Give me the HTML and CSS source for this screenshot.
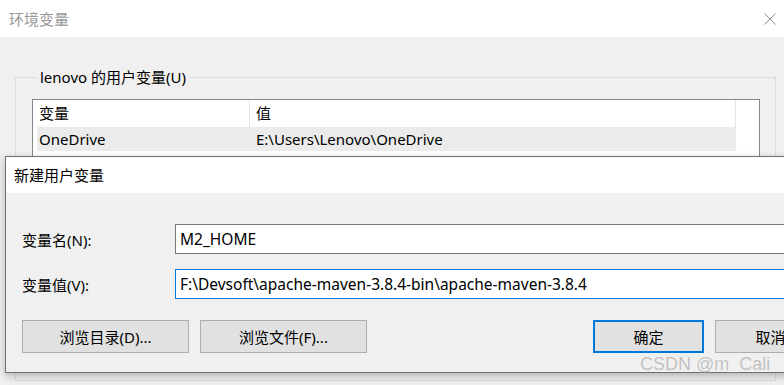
FILE: index.html
```html
<!DOCTYPE html>
<html lang="zh-CN">
<head>
    <meta charset="UTF-8">
    <meta name="viewport" content="width=device-width, initial-scale=1.0">
    <title>环境变量</title>
    <link rel="stylesheet" href="styles.css">
</head>
<body>

    <!-- Hlavní okno: 环境变量 -->
    <div class="window">
        <div class="titlebar">
            <span class="title">环境变量</span>
            <svg class="close-icon" width="12" height="12" viewBox="0 0 12 12">
                <path d="M0.5 0.5 L11.5 11.5 M11.5 0.5 L0.5 11.5" stroke="#8a8a8a" stroke-width="1" fill="none"/>
            </svg>
        </div>
        <div class="window-body">
            <fieldset class="group">
                <legend>lenovo 的用户变量(U)</legend>
                <div class="listbox">
                    <div class="list-head">
                        <div class="col col-name">变量</div>
                        <div class="col col-value">值</div>
                    </div>
                    <div class="list-row">
                        <div class="col col-name">OneDrive</div>
                        <div class="col col-value">E:\Users\Lenovo\OneDrive</div>
                    </div>
                </div>
            </fieldset>
        </div>
    </div>

    <!-- Dialog: 新建用户变量 -->
    <div class="dialog">
        <div class="dialog-title">新建用户变量</div>
        <div class="dialog-body">
            <div class="field">
                <label for="var_name">变量名(N):</label>
                <input type="text" id="var_name" value="M2_HOME">
            </div>
            <div class="field">
                <label for="var_value">变量值(V):</label>
                <input type="text" id="var_value" class="focused" value="F:\Devsoft\apache-maven-3.8.4-bin\apache-maven-3.8.4">
            </div>
            <div class="buttons">
                <button>浏览目录(D)...</button>
                <button>浏览文件(F)...</button>
                <div class="buttons-right">
                    <button class="default">确定</button>
                    <button>取消</button>
                </div>
            </div>
        </div>
    </div>

    <div class="watermark">CSDN @m_Cali</div>

</body>
</html>
```

FILE: styles.css
```css
/* Základ */
body {
    margin: 0;
    width: 784px;
    height: 385px;
    overflow: hidden;
    position: relative;
    background-color: #f0f0f0;
    font-family: "Noto Sans", "Noto Sans CJK SC", sans-serif;
    font-size: 15px;
    color: #000;
}

/* Hlavní okno */
.titlebar {
    height: 37px;
    background-color: #fff;
    display: flex;
    align-items: center;
    justify-content: space-between;
    padding: 0 8px 0 9px;
}

.title {
    color: #999;
}

.window-body {
    padding-top: 30px;
}

.group {
    margin: 0 8px 0 15px;
    padding: 12px 15px 0 16px;
    border: 1px solid #dcdcdc;
    height: 300px;
}

.group legend {
    padding: 0 3px;
    margin-left: 5px;
    line-height: 20px;
}

.listbox {
    border: 1px solid #828790;
    background-color: #fff;
    height: 240px;
}

.list-head,
.list-row {
    display: flex;
    width: 703px;
}

.list-head {
    height: 27px;
    align-items: center;
}

.list-head .col-name {
    border-right: 1px solid #e5e5e5;
}

.list-head .col-value {
    border-right: 1px solid #e5e5e5;
}

.list-head .col {
    height: 27px;
    line-height: 27px;
}

.col-name {
    width: 210px;
    padding-left: 6px;
}

.col-value {
    flex: 1;
    padding-left: 6px;
}

.list-row {
    height: 24px;
    line-height: 24px;
    margin-left: 4px;
    width: 699px;
    background-color: #ebebeb;
}

.list-row .col-name {
    width: 211px;
    padding-left: 2px;
}

/* Dialog přes okno */
.dialog {
    position: absolute;
    left: 5px;
    top: 156px;
    width: 860px;
    border: 1px solid #6f6f6f;
    box-shadow: 0 3px 8px rgba(0, 0, 0, 0.25);
    background-color: #f0f0f0;
}

.dialog-title {
    height: 36px;
    line-height: 36px;
    background-color: #fff;
    padding-left: 8px;
}

.dialog-body {
    padding: 31px 16px 19px 16px;
}

.field {
    display: flex;
    align-items: center;
    margin-bottom: 15px;
}

.field label {
    width: 153px;
}

.field input {
    flex: 1;
    height: 28px;
    border: 1px solid #7a7a7a;
    padding: 0 4px;
    margin: 0;
    font: inherit;
    font-size: 15.5px;
    outline: none;
}

.field input.focused {
    border-color: #0078d7;
}

.buttons {
    display: flex;
    gap: 11px;
    margin-top: 21px;
}

.buttons button {
    width: 167px;
    height: 33px;
    border: 1px solid #adadad;
    background-color: #e1e1e1;
    font: inherit;
    padding: 0;
}

.buttons-right {
    display: flex;
    gap: 11px;
    margin-left: 215px;
}

.buttons-right button {
    width: 111px;
}

.buttons button.default {
    border: 2px solid #0078d7;
}

/* Vodoznak */
.watermark {
    position: absolute;
    left: 640px;
    top: 354px;
    font-family: "Liberation Sans", sans-serif;
    font-size: 18px;
    color: rgba(150, 150, 150, 0.6);
    text-shadow: 0 0 1px #fff;
}
```
